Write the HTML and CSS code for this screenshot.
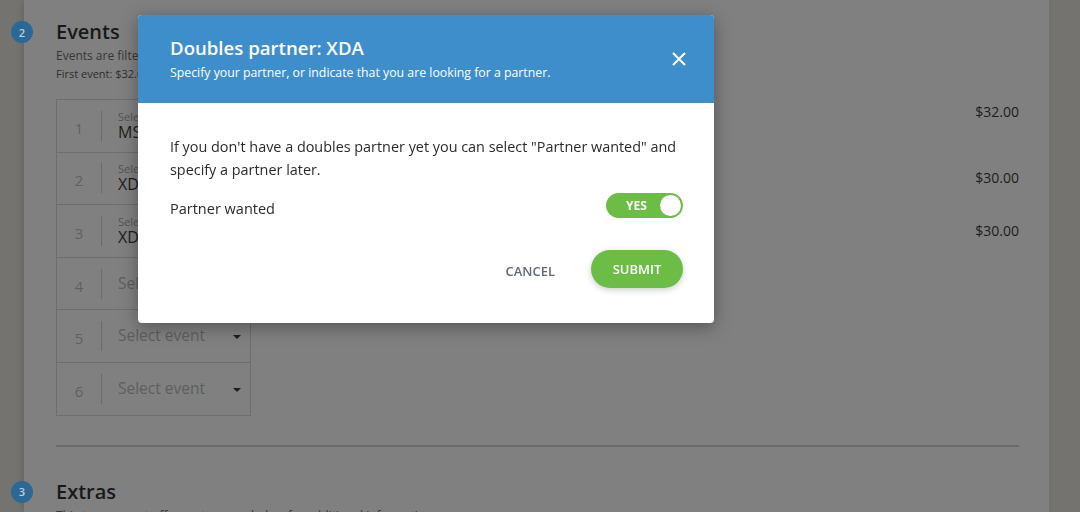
FILE: index.html
```html
<!DOCTYPE html>
<html lang="en">
<head>
  <meta charset="UTF-8" />
  <title>Registration - Events</title>
  <link rel="stylesheet" href="styles.css">
</head>
<body>

  <div class="page">
    <!-- Step 2: events -->
    <section class="step">
      <div class="step-head">
        <span class="step-num">2</span>
        <h2>Events</h2>
      </div>
      <p class="step-desc">Events are filtered based on your age and gender.</p>
      <p class="step-note">First event: $32.00, each additional event: $30.00</p>

      <div class="events">
        <div class="event-line">
          <div class="event-box">
            <span class="event-idx">1</span>
            <div class="event-select">
              <small>Selected event</small>
              <span class="event-val">MS Open</span>
            </div>
          </div>
          <span class="price price-top">$32.00</span>
        </div>
        <div class="event-line">
          <div class="event-box">
            <span class="event-idx">2</span>
            <div class="event-select">
              <small>Selected event</small>
              <span class="event-val">XDA</span>
            </div>
          </div>
          <span class="price">$30.00</span>
        </div>
        <div class="event-line">
          <div class="event-box">
            <span class="event-idx">3</span>
            <div class="event-select">
              <small>Selected event</small>
              <span class="event-val">XDB</span>
            </div>
          </div>
          <span class="price">$30.00</span>
        </div>
        <div class="event-line">
          <div class="event-box">
            <span class="event-idx">4</span>
            <div class="event-select empty">Select event <span class="caret"></span></div>
          </div>
        </div>
        <div class="event-line">
          <div class="event-box">
            <span class="event-idx">5</span>
            <div class="event-select empty">Select event <span class="caret"></span></div>
          </div>
        </div>
        <div class="event-line last">
          <div class="event-box">
            <span class="event-idx">6</span>
            <div class="event-select empty">Select event <span class="caret"></span></div>
          </div>
        </div>
      </div>

      <hr class="divider">
    </section>

    <!-- Step 3: extras -->
    <section class="step">
      <div class="step-head">
        <span class="step-num">3</span>
        <h2>Extras</h2>
      </div>
      <p class="step-desc">This tournament offers extras, see below for additional information.</p>
    </section>
  </div>

  <!-- Partner modal -->
  <div class="modal">
    <div class="modal-header">
      <div>
        <h3>Doubles partner: XDA</h3>
        <p>Specify your partner, or indicate that you are looking for a partner.</p>
      </div>
      <span class="close-btn">
        <svg width="16" height="16" viewBox="0 0 16 16"><path d="M2 2 L14 14 M14 2 L2 14" stroke="#fff" stroke-width="2" fill="none"/></svg>
      </span>
    </div>
    <div class="modal-body">
      <p>If you don't have a doubles partner yet you can select "Partner wanted" and specify a partner later.</p>
      <div class="toggle-row">
        <span>Partner wanted</span>
        <span class="toggle"><span class="toggle-label">YES</span><span class="knob"></span></span>
      </div>
      <div class="modal-actions">
        <button class="btn-cancel">Cancel</button>
        <button class="btn-submit">Submit</button>
      </div>
    </div>
  </div>

</body>
</html>
```

FILE: styles.css
```css
* {
  box-sizing: border-box;
}

html, body {
  height: 100%;
}

body {
  margin: 0;
  font-family: 'Open Sans', 'Noto Sans', sans-serif;
  background: #747370;
  overflow: hidden;
}

.page {
  margin: 0 31px 0 24px;
  height: 100%;
  background: #808080;
  padding: 18px 30px 0 32px;
  box-shadow: -2px 0 6px rgba(0,0,0,0.12);
}

.step-head {
  display: flex;
  align-items: center;
  height: 28px;
}

.step-num {
  width: 22px;
  height: 22px;
  border-radius: 50%;
  background: #2b6896;
  color: #c3ccd4;
  font-size: 11px;
  font-weight: 600;
  display: flex;
  align-items: center;
  justify-content: center;
  margin-left: -45px;
  margin-right: 23px;
  flex-shrink: 0;
}

.step-head h2 {
  margin: 0;
  font-size: 20px;
  font-weight: 600;
  color: #191919;
  line-height: 28px;
}

.step-desc {
  margin: 1px 0 0;
  font-size: 12px;
  line-height: 18px;
  color: #363636;
}

.step-note {
  margin: 0;
  font-size: 11px;
  line-height: 18px;
  color: #2e2e2e;
}

.events {
  margin-top: 16px;
}

.event-line {
  display: flex;
  align-items: center;
  justify-content: space-between;
}

.event-box {
  width: 195px;
  height: 52.6px;
  border: 1px solid #6e6e6e;
  border-bottom: none;
  display: flex;
  align-items: center;
}

.event-line.last .event-box {
  border-bottom: 1px solid #6e6e6e;
  height: 53.6px;
}

.event-idx {
  width: 45px;
  height: 30px;
  border-right: 1px solid #6a6a6a;
  text-align: center;
  font-size: 15px;
  color: #606060;
  line-height: 34px;
}

.event-select {
  flex: 1;
  padding-left: 16px;
  display: flex;
  flex-direction: column;
  line-height: 1.2;
}

.event-select small {
  font-size: 11px;
  color: #545454;
}

.event-val {
  font-size: 16px;
  color: #1d1d1d;
}

.event-select.empty {
  flex-direction: row;
  align-items: center;
  justify-content: space-between;
  padding-right: 9px;
  font-size: 15.5px;
  color: #5e5e5e;
  margin-top: -1px;
}

.caret {
  width: 0;
  height: 0;
  border-left: 4px solid transparent;
  border-right: 4px solid transparent;
  border-top: 4px solid #1e1e1e;
  margin-top: 3px;
}

.price {
  font-size: 14px;
  color: #1d1d1d;
}

.price-top {
  align-self: flex-start;
  margin-top: 3px;
}

.divider {
  border: none;
  border-top: 2px solid #6b6b6b;
  margin: 29px 0 31px;
}

/* Modal */
.modal {
  position: fixed;
  left: 138px;
  top: 15px;
  width: 576px;
  background: #fff;
  border-radius: 4px;
  overflow: hidden;
  box-shadow: 0 4px 18px rgba(0,0,0,0.35);
}

.modal-header {
  background: #3f8ecc;
  color: #fff;
  padding: 19px 32px 22px;
  display: flex;
  justify-content: space-between;
  align-items: center;
}

.modal-header h3 {
  margin: 0;
  font-size: 18.6px;
  font-weight: 600;
  line-height: 28px;
}

.modal-header p {
  margin: 3px 0 0;
  font-size: 12.3px;
  line-height: 16px;
}

.close-btn {
  display: flex;
  margin-right: -5px;
  margin-top: 2px;
  cursor: pointer;
}

.modal-body {
  padding: 32px 31px 35px 32px;
  color: #2b2b2b;
}

.modal-body p {
  margin: 0;
  font-size: 14.4px;
  line-height: 23px;
}

.toggle-row {
  display: flex;
  justify-content: space-between;
  align-items: center;
  margin-top: 12px;
  font-size: 14.5px;
}

.toggle-row > span:first-child {
  margin-top: 5px;
}

.toggle {
  width: 77px;
  height: 25px;
  border-radius: 13px;
  background: #6cbd45;
  display: flex;
  align-items: center;
  justify-content: space-between;
  padding: 0 2px 0 20px;
}

.toggle-label {
  color: #fff;
  font-size: 12px;
  font-weight: 700;
}

.knob {
  width: 21px;
  height: 21px;
  border-radius: 50%;
  background: #fff;
}

.modal-actions {
  display: flex;
  justify-content: flex-end;
  align-items: center;
  margin-top: 32px;
}

.modal-actions button {
  font-family: inherit;
  border: none;
  cursor: pointer;
  text-transform: uppercase;
  font-size: 13px;
  font-weight: 600;
}

.btn-cancel {
  background: none;
  color: #636878;
  padding: 0;
  margin: 4px 36px 0 0;
}

.btn-submit {
  width: 92px;
  height: 38px;
  border-radius: 19px;
  background: #6cbd45;
  color: #fff;
  box-shadow: 0 2px 6px rgba(0,0,0,0.2);
}
```
